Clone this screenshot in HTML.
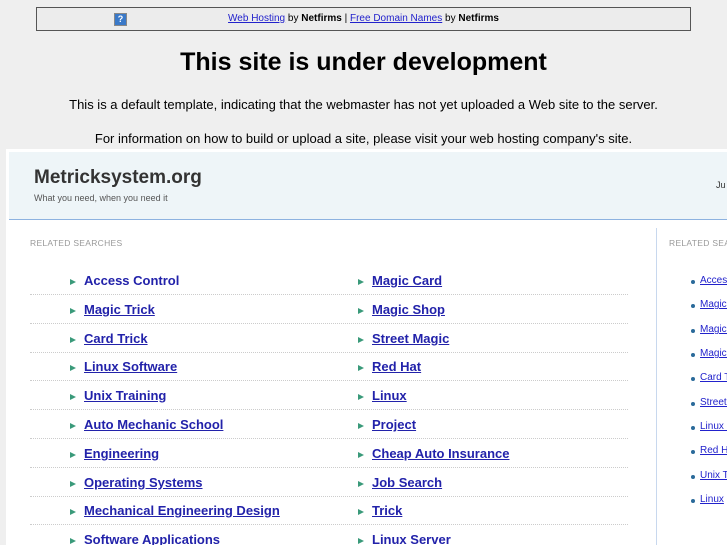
<!DOCTYPE html>
<html><head><style>
body{margin:0;width:727px;height:545px;overflow:hidden;background:#efefef;font-family:"Liberation Sans",sans-serif;position:relative}
.bar{position:absolute;left:36px;top:7px;width:653px;height:22px;border:1px solid #555;background:#ececec;font-size:10px;text-align:center;line-height:22px}
.bar a{color:#2222cc;text-decoration:underline}
.q{position:absolute;left:77px;top:5px;width:11px;height:11px;background:#3a79c8;color:#fff;font-size:9px;line-height:11px;font-weight:bold;border:1px solid #888}
h1{position:absolute;top:48px;left:0;width:727px;text-align:center;margin:0;font-size:25px;font-weight:bold}
.p{position:absolute;left:0;width:727px;text-align:center;font-size:13px}
.frame{position:absolute;left:6px;top:149px;width:721px;height:396px;background:#fff;overflow:hidden}
.hdr{position:absolute;left:3px;top:3px;width:718px;height:67px;background:#eef5f8;border-bottom:1px solid #8db2e0}
.t{position:absolute;left:25px;top:15px;font-size:19px;font-weight:bold;color:#333}
.s{position:absolute;left:25px;top:41px;font-size:9px;color:#555}
.ju{position:absolute;left:707px;top:28px;font-size:9px;color:#333}
.rs{position:absolute;font-size:8.5px;color:#999;letter-spacing:.3px;white-space:nowrap}
.row{position:absolute;left:24px;width:598px;height:28.8px;border-bottom:1px dotted #ccc}
.row a{position:absolute;top:8px;font-size:13px;font-weight:bold;color:#2222aa;text-decoration:underline}
.row i{position:absolute;top:14px;width:0;height:0;border-left:6px solid #3a9a7a;border-top:3px solid transparent;border-bottom:3px solid transparent}
.vl{position:absolute;left:650px;top:79px;width:1px;height:317px;background:#c8d8ee}
.sl{position:absolute;left:694px;font-size:10px;color:#2222cc;text-decoration:underline;white-space:nowrap}
.sl:before{content:"";position:absolute;left:-9px;top:5px;width:4px;height:4px;border-radius:2px;background:#2a6a9a}
</style></head><body>
<div class="bar"><span class="q">?</span><a>Web Hosting</a> by <b>Netfirms</b> | <a>Free Domain Names</a> by <b>Netfirms</b></div>
<h1>This site is under development</h1>
<div class="p" style="top:97px">This is a default template, indicating that the webmaster has not yet uploaded a Web site to the server.</div>
<div class="p" style="top:131px">For information on how to build or upload a site, please visit your web hosting company's site.</div>
<div class="frame">
<div class="hdr"><div class="t">Metricksystem.org</div><div class="s">What you need, when you need it</div><div class="ju">Ju</div></div>
<div class="rs" style="left:24px;top:89px">RELATED SEARCHES</div>
<div class="rs" style="left:663px;top:89px">RELATED SEARCHES</div>
<div class="vl"></div>
<div class="row" style="top:116px"><i style="left:40px"></i><a style="left:54px;text-decoration:none">Access Control</a><i style="left:328px"></i><a style="left:342px">Magic Card</a></div>
<div class="row" style="top:145px"><i style="left:40px"></i><a style="left:54px">Magic Trick</a><i style="left:328px"></i><a style="left:342px">Magic Shop</a></div>
<div class="row" style="top:174px"><i style="left:40px"></i><a style="left:54px">Card Trick</a><i style="left:328px"></i><a style="left:342px">Street Magic</a></div>
<div class="row" style="top:202px"><i style="left:40px"></i><a style="left:54px">Linux Software</a><i style="left:328px"></i><a style="left:342px">Red Hat</a></div>
<div class="row" style="top:231px"><i style="left:40px"></i><a style="left:54px">Unix Training</a><i style="left:328px"></i><a style="left:342px">Linux</a></div>
<div class="row" style="top:260px"><i style="left:40px"></i><a style="left:54px">Auto Mechanic School</a><i style="left:328px"></i><a style="left:342px">Project</a></div>
<div class="row" style="top:289px"><i style="left:40px"></i><a style="left:54px">Engineering</a><i style="left:328px"></i><a style="left:342px">Cheap Auto Insurance</a></div>
<div class="row" style="top:318px"><i style="left:40px"></i><a style="left:54px">Operating Systems</a><i style="left:328px"></i><a style="left:342px">Job Search</a></div>
<div class="row" style="top:346px"><i style="left:40px"></i><a style="left:54px">Mechanical Engineering Design</a><i style="left:328px"></i><a style="left:342px">Trick</a></div>
<div class="row" style="top:375px;border:none"><i style="left:40px"></i><a style="left:54px">Software Applications</a><i style="left:328px"></i><a style="left:342px">Linux Server</a></div>
<a class="sl" style="top:126px">Access Control</a>
<a class="sl" style="top:150px">Magic Trick</a>
<a class="sl" style="top:175px">Magic Card</a>
<a class="sl" style="top:199px">Magic Shop</a>
<a class="sl" style="top:223px">Card Trick</a>
<a class="sl" style="top:248px">Street Magic</a>
<a class="sl" style="top:272px">Linux Software</a>
<a class="sl" style="top:296px">Red Hat</a>
<a class="sl" style="top:321px">Unix Training</a>
<a class="sl" style="top:345px">Linux</a>
</div>
</body></html>
